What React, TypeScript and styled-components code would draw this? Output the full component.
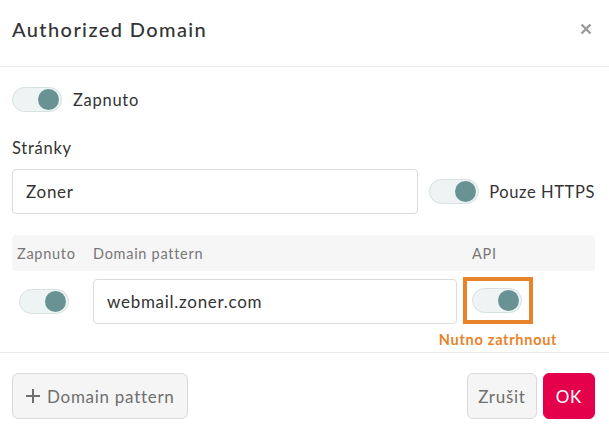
import React from "react";
import styled, { createGlobalStyle } from "styled-components";

const Global = createGlobalStyle`
  html, body { margin: 0; padding: 0; background: #fff; }
  body { font-family: "Lato", "Open Sans", sans-serif; color: #333; letter-spacing: 0.045em; }
  * { box-sizing: border-box; }
`;

const Modal = styled.div`
  width: 609px;
  background: #fff;
`;

const Header = styled.div`
  height: 67px;
  display: flex;
  align-items: center;
  justify-content: space-between;
  padding: 0 16px 8px 12px;
  border-bottom: 1px solid #e9e9e9;
`;

const Title = styled.h1`
  margin: 0;
  font-size: 20px;
  font-weight: 500;
  color: #333;
  letter-spacing: 1.4px;
`;

const Close = styled.button`
  border: 0;
  background: none;
  padding: 0;
  width: 14px;
  height: 14px;
  display: flex;
  align-items: center;
  justify-content: center;
  cursor: pointer;
`;

const Body = styled.div`
  padding: 20px 14px 1px 12px;
  display: flex;
  flex-direction: column;
`;

const ToggleLine = styled.label`
  display: flex;
  align-items: center;
  gap: 11px;
  font-size: 16.5px;
  color: #333;
  white-space: nowrap;
`;

const SiteToggleLine = styled(ToggleLine)`
  gap: 10px;
  letter-spacing: 0.6px;
`;

const Track = styled.span`
  position: relative;
  display: inline-block;
  flex: none;
  width: 50px;
  height: 25px;
  border-radius: 13px;
  background: #eef3f3;
  border: 1px solid #d6e1e1;
`;

const Knob = styled.span`
  position: absolute;
  right: 2px;
  top: 1px;
  width: 21px;
  height: 21px;
  border-radius: 50%;
  background: #699292;
`;

const Toggle = () => (
  <Track>
    <Knob />
  </Track>
);

const Label = styled.div`
  margin-top: 26px;
  font-size: 16.5px;
  color: #333;
`;

const SiteRow = styled.div`
  margin-top: 11px;
  display: flex;
  align-items: center;
  gap: 11px;
`;

const Input = styled.div<{ $w?: number }>`
  flex: ${(p) => (p.$w ? "none" : "1")};
  width: ${(p) => (p.$w ? `${p.$w}px` : "auto")};
  height: 45px;
  border: 1px solid #dcdcdc;
  border-radius: 4px;
  background: #fff;
  display: flex;
  align-items: center;
  padding-left: 13px;
  font-size: 17px;
  color: #333;
`;

const Grid = styled.div`
  display: grid;
  grid-template-columns: 81px 370px 1fr;
`;

const TableHead = styled(Grid)`
  margin-top: 21px;
  height: 36px;
  background: #f6f6f6;
  border-radius: 4px;
  align-items: center;
  font-size: 14.5px;
  color: #777;
`;

const HeadCell = styled.div<{ $pad: number }>`
  padding-left: ${(p) => p.$pad}px;
`;

const TableRow = styled(Grid)`
  margin-top: 6px;
  align-items: end;
`;

const Cell = styled.div<{ $pad?: number }>`
  padding-left: ${(p) => p.$pad ?? 0}px;
  display: flex;
  align-items: center;
  height: 45px;
`;

const Highlight = styled.div`
  width: 70px;
  height: 47px;
  border: 4px solid #e8832a;
  display: flex;
  align-items: center;
  padding-left: 5px;
`;

const WarnRow = styled(Grid)``;

const Warn = styled.div`
  grid-column: 3;
  width: 70px;
  display: flex;
  justify-content: center;
  white-space: nowrap;
  font-size: 14.5px;
  font-weight: 700;
  color: #e8832a;
  margin-top: 7px;
  height: 20px;
`;

const Footer = styled.div`
  border-top: 1px solid #e9e9e9;
  padding: 20px 14px 0 12px;
  display: flex;
  align-items: center;
  justify-content: space-between;
`;

const Btn = styled.button<{ $primary?: boolean; $pad?: number }>`
  height: 46px;
  border-radius: 6px;
  font-family: inherit;
  letter-spacing: inherit;
  font-size: 17px;
  padding: 0 ${(p) => p.$pad ?? 12}px;
  display: flex;
  align-items: center;
  gap: 6px;
  border: 1px solid ${(p) => (p.$primary ? "#e4004b" : "#dadada")};
  background: ${(p) => (p.$primary ? "#e4004b" : "#f5f5f5")};
  color: ${(p) => (p.$primary ? "#fff" : "#6f6f6f")};
  cursor: pointer;
`;

const Right = styled.div`
  display: flex;
  gap: 6px;
`;

export default function App() {
  return (
    <>
      <Global />
      <Modal>
        <Header>
          <Title>Authorized Domain</Title>
          <Close aria-label="close">
            <svg width="12" height="12" viewBox="0 0 12 12">
              <path d="M1.5 1.5 L10.5 10.5 M10.5 1.5 L1.5 10.5" stroke="#9a9a9a" strokeWidth="2.4" strokeLinecap="butt" />
            </svg>
          </Close>
        </Header>
        <Body>
          <ToggleLine>
            <Toggle />
            Zapnuto
          </ToggleLine>
          <Label>Stránky</Label>
          <SiteRow>
            <Input>Zoner</Input>
            <SiteToggleLine>
              <Toggle />
              Pouze HTTPS
            </SiteToggleLine>
          </SiteRow>
          <TableHead>
            <HeadCell $pad={5}>Zapnuto</HeadCell>
            <HeadCell $pad={0}>Domain pattern</HeadCell>
            <HeadCell $pad={9}>API</HeadCell>
          </TableHead>
          <TableRow>
            <Cell $pad={7}>
              <Toggle />
            </Cell>
            <Cell>
              <Input $w={364}>webmail.zoner.com</Input>
            </Cell>
            <div>
              <Highlight>
                <Toggle />
              </Highlight>
            </div>
          </TableRow>
          <WarnRow>
            <Warn>Nutno zatrhnout</Warn>
          </WarnRow>
        </Body>
        <Footer>
          <Btn>
            <svg width="16" height="16" viewBox="0 0 16 16">
              <path d="M8 1 V15 M1 8 H15" stroke="#6f6f6f" strokeWidth="2" />
            </svg>
            Domain pattern
          </Btn>
          <Right>
            <Btn $pad={10}>Zrušit</Btn>
            <Btn $primary $pad={12}>OK</Btn>
          </Right>
        </Footer>
      </Modal>
    </>
  );
}
